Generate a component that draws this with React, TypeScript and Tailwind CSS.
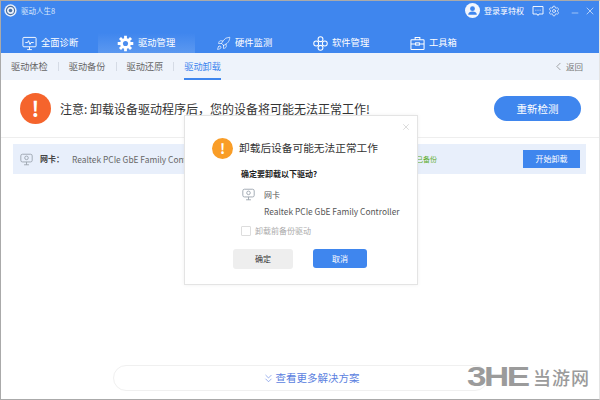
import { ChevronLeft, ChevronsDown, Minus, Rocket, Settings, X } from "lucide-react";
import { ReactNode } from "react";

const fontStack = "font-['Noto_Sans_CJK_SC','Noto_Sans',sans-serif]";

const MonitorIcon = ({ className }: { className?: string }) => (
  <svg viewBox="0 0 16 16" fill="none" stroke="currentColor" strokeWidth="1" className={className}>
    <rect x="1" y="1.5" width="14" height="10" rx="1" />
    <path d="M5.5 14.5h5M8 11.5v3" />
    <path d="M3.5 7h2.5l1-2 1.5 4 1-2h3" />
  </svg>
);

const SmallMonitor = () => (
  <svg viewBox="0 0 16 16" fill="none" stroke="#9aa3ad" strokeWidth="1.1" className="w-[13px] h-[13px] shrink-0">
    <rect x="1" y="1.5" width="14" height="9.5" rx="2" />
    <circle cx="8" cy="6" r="2.2" />
    <path d="M5 14.5h6M8 11v3.5" />
  </svg>
);

const GearIcon = () => (
  <svg viewBox="0 0 24 24" className="w-[17px] h-[17px] shrink-0">
    <g stroke="#fff" strokeWidth="4">
      <path d="M12 1v22M1 12h22M4.2 4.2l15.6 15.6M19.8 4.2L4.2 19.8" />
    </g>
    <circle cx="12" cy="12" r="7.6" fill="#fff" />
    <circle cx="12" cy="12" r="3.6" fill="#4a8def" />
  </svg>
);

const FlowerIcon = () => (
  <svg viewBox="0 0 16 16" fill="none" stroke="currentColor" strokeWidth="1.1" className="w-[15px] h-[15px] shrink-0">
    <circle cx="8" cy="3.4" r="2.6" />
    <circle cx="8" cy="12.6" r="2.6" />
    <circle cx="3.4" cy="8" r="2.6" />
    <circle cx="12.6" cy="8" r="2.6" />
  </svg>
);

const ToolboxIcon = () => (
  <svg viewBox="0 0 16 16" fill="none" stroke="currentColor" strokeWidth="1.1" className="w-[15px] h-[15px] shrink-0">
    <rect x="1" y="4" width="14" height="10.5" rx="0.8" />
    <path d="M5.5 4V1.6h5V4M1 8.5h5M10 8.5h5" />
    <rect x="6" y="7.3" width="4" height="2.4" />
  </svg>
);

const LogoIcon = () => (
  <svg viewBox="0 0 14 14" className="w-[13px] h-[13px] shrink-0">
    <circle cx="7" cy="7" r="6.6" fill="#e9f0fb" />
    <circle cx="7" cy="7" r="4.4" fill="none" stroke="#4a6f9f" strokeWidth="1.2" />
    <circle cx="7" cy="7" r="1.9" fill="#4a6f9f" />
  </svg>
);

const UserIcon = () => (
  <svg viewBox="0 0 16 16" className="w-[15px] h-[15px] shrink-0">
    <circle cx="8" cy="8" r="8" fill="#f2f6fd" />
    <circle cx="8" cy="6" r="2.6" fill="#3f86ee" />
    <path d="M3.4 12.4c0-2.4 2-3.4 4.6-3.4s4.600 1 4.600 3.400z" fill="#3f86ee" />
  </svg>
);

const MessageIcon = () => (
  <svg viewBox="0 0 12 12" fill="none" stroke="#fff" strokeWidth="0.9" className="w-[12px] h-[12px] shrink-0">
    <path d="M1 1.500h10v7.500H7l-1 1.500-1-1.500H1z" />
    <path d="M3.500 5.200h.8M5.600 5.200h.8M7.700 5.200h.8" />
  </svg>
);

const Tab = ({ icon, label, pad, active }: { icon: ReactNode; label: string; pad: string; active?: boolean }) => (
  <div
    className={`w-[97px] h-full flex items-center gap-[4px] text-white text-[9.3px] ${pad} ${
      active ? "bg-gradient-to-b from-[#3f86ee] to-[#5b98f0]" : ""
    }`}
  >
    {icon}
    <span>{label}</span>
  </div>
);

const subTabs = ["驱动体检", "驱动备份", "驱动还原"];

export default function App() {
  return (
    <div className={`relative w-[600px] h-[400px] overflow-hidden bg-white border-t border-l border-b border-r border-t-[#aaa] border-l-[#aaa] border-b-[#aaa] border-r-[#e4e4e4] ${fontStack}`}>
      {/* title bar and main tabs */}
      <div className="h-[52px] bg-[#3f86ee] flex flex-col">
        <div className="h-[32px] flex items-start">
          <div className="flex items-center gap-[4px] pl-[3px] pt-[3px] text-[7.5px] text-[#dbe7fb]">
            <LogoIcon />
            <span>驱动人生8</span>
          </div>
          <div className="ml-auto flex items-center text-white pt-[2px] pr-[3px]">
            <UserIcon />
            <span className="ml-[4px] text-[8px] w-[40px] whitespace-nowrap">登录享特权</span>
            <span className="ml-[8px]"><MessageIcon /></span>
            <Settings size={12} strokeWidth={1.4} className="ml-[4px]" />
            <Minus size={10} strokeWidth={1.2} className="ml-[10px] mt-[5px]" />
            <X size={12} strokeWidth={1.2} className="ml-[4px]" />
          </div>
        </div>
        <div className="flex-1 flex">
          <Tab pad="pl-[21px]" label="全面诊断" icon={<MonitorIcon className="w-[15px] h-[15px] shrink-0" />} />
          <Tab pad="pl-[19px]" label="驱动管理" active icon={<GearIcon />} />
          <Tab pad="pl-[21px]" label="硬件监测" icon={<Rocket size={15} strokeWidth={1.1} className="shrink-0" />} />
          <Tab pad="pl-[21px]" label="软件管理" icon={<FlowerIcon />} />
          <Tab pad="pl-[21px]" label="工具箱" icon={<ToolboxIcon />} />
        </div>
      </div>

      {/* sub navigation */}
      <div className="h-[27px] bg-[#eef3fb] flex items-center pl-[10px] pr-[16px] text-[9.2px] text-[#666]">
        {subTabs.map((t) => (
          <div key={t} className="flex items-center">
            <span>{t}</span>
            <span className="w-px h-[9px] bg-[#d5dbe5] mx-[10px]" />
          </div>
        ))}
        <div className="relative h-full flex items-center text-[#3f86ee]">
          <span>驱动卸载</span>
          <span className="absolute left-0 right-0 bottom-0 h-[2px] bg-[#3f86ee]" />
        </div>
        <div className="ml-auto flex items-center text-[8.5px] text-[#777]">
          <ChevronLeft size={13} strokeWidth={1.2} />
          <span className="ml-[1px]">返回</span>
        </div>
      </div>

      {/* warning */}
      <div className="h-[58px] flex items-center pl-[19px] pr-[18px] border-b border-[#eeeeee]">
        <div className="w-[31px] h-[31px] rounded-full bg-[#f5642c] text-white flex items-center justify-center text-[21px] font-bold shrink-0">!</div>
        <span className="ml-[9px] text-[12px] text-[#333] whitespace-nowrap">注意: 卸载设备驱动程序后，您的设备将可能无法正常工作!</span>
        <button className="ml-auto w-[87px] h-[25px] rounded-full bg-[#3f86ee] text-white text-[10.5px]">重新检测</button>
      </div>

      {/* driver row */}
      <div className="mx-[12px] mt-[6px] h-[30px] w-[573px] bg-[#e8effb] flex items-center pl-[7px] pr-[6px]">
        <SmallMonitor />
        <span className="ml-[7px] text-[8px] font-bold text-[#444]">网卡：</span>
        <span className="ml-[8px] text-[8.4px] text-[#666] whitespace-nowrap">Realtek PCIe GbE Family Controller</span>
        <span className="ml-auto text-[7px] text-[#5fae2e]">已备份</span>
        <button className="ml-[86px] w-[57px] h-[18px] bg-[#3f86ee] text-white text-[8px]">开始卸载</button>
      </div>

      {/* more solutions */}
      <div className="absolute left-[112px] top-[364px] w-[375px] h-[26px] rounded-full border border-[#f0f0f0] flex items-center justify-center gap-[1px] pl-[20px] text-[10.5px] text-[#5b7fe0]">
        <ChevronsDown size={13} strokeWidth={1.1} />
        <span>查看更多解决方案</span>
      </div>

      {/* confirm dialog */}
      <div className="absolute left-[183px] top-[114px] w-[234px] h-[170px] bg-white border border-[#e4e4e4] shadow-[0_0_4px_rgba(0,0,0,0.06)] flex flex-col pl-[27px]">
        <X size={10} strokeWidth={1} className="absolute right-[6px] top-[6px] text-[#aaa]" />
        <div className="mt-[22px] flex items-center">
          <div className="w-[21px] h-[21px] rounded-full bg-[#f99d27] text-white flex items-center justify-center text-[14px] font-bold shrink-0">!</div>
          <span className="ml-[6px] text-[10.7px] text-[#333] whitespace-nowrap">卸载后设备可能无法正常工作</span>
        </div>
        <div className="mt-[9px] ml-[29px] text-[8px] font-bold text-[#222]">确定要卸载以下驱动?</div>
        <div className="mt-[8px] flex items-center">
          <span className="ml-[30px]"><SmallMonitor /></span>
          <span className="ml-[9px] text-[8px] text-[#555]">网卡</span>
        </div>
        <div className="mt-[4px] ml-[52px] text-[8.4px] text-[#555] whitespace-nowrap">Realtek PCIe GbE Family Controller</div>
        <div className="mt-[7px] ml-[29px] flex items-center text-[8px] text-[#aaa]">
          <span className="w-[10px] h-[10px] border border-[#ddd] rounded-[1px]" />
          <span className="ml-[4px]">卸载前备份驱动</span>
        </div>
        <div className="mt-[12px] ml-[21px] flex items-center">
          <button className="w-[60px] h-[20px] rounded-[3px] bg-[#eeeeee] text-[8px] text-[#333]">确定</button>
          <button className="ml-[20px] w-[54px] h-[19px] rounded-[3px] bg-[#3f86ee] text-[8px] text-white">取消</button>
        </div>
      </div>

      {/* watermark */}
      <div className="absolute right-[9px] top-[362px] flex items-center text-[#9b9b9b]">
        <span className="font-['Liberation_Sans'] font-bold text-[28px] leading-none tracking-[-2px] scale-x-125 mr-[12px]">3HE</span>
        <span className="text-[18px] font-medium tracking-[1px]">当游网</span>
      </div>
    </div>
  );
}
